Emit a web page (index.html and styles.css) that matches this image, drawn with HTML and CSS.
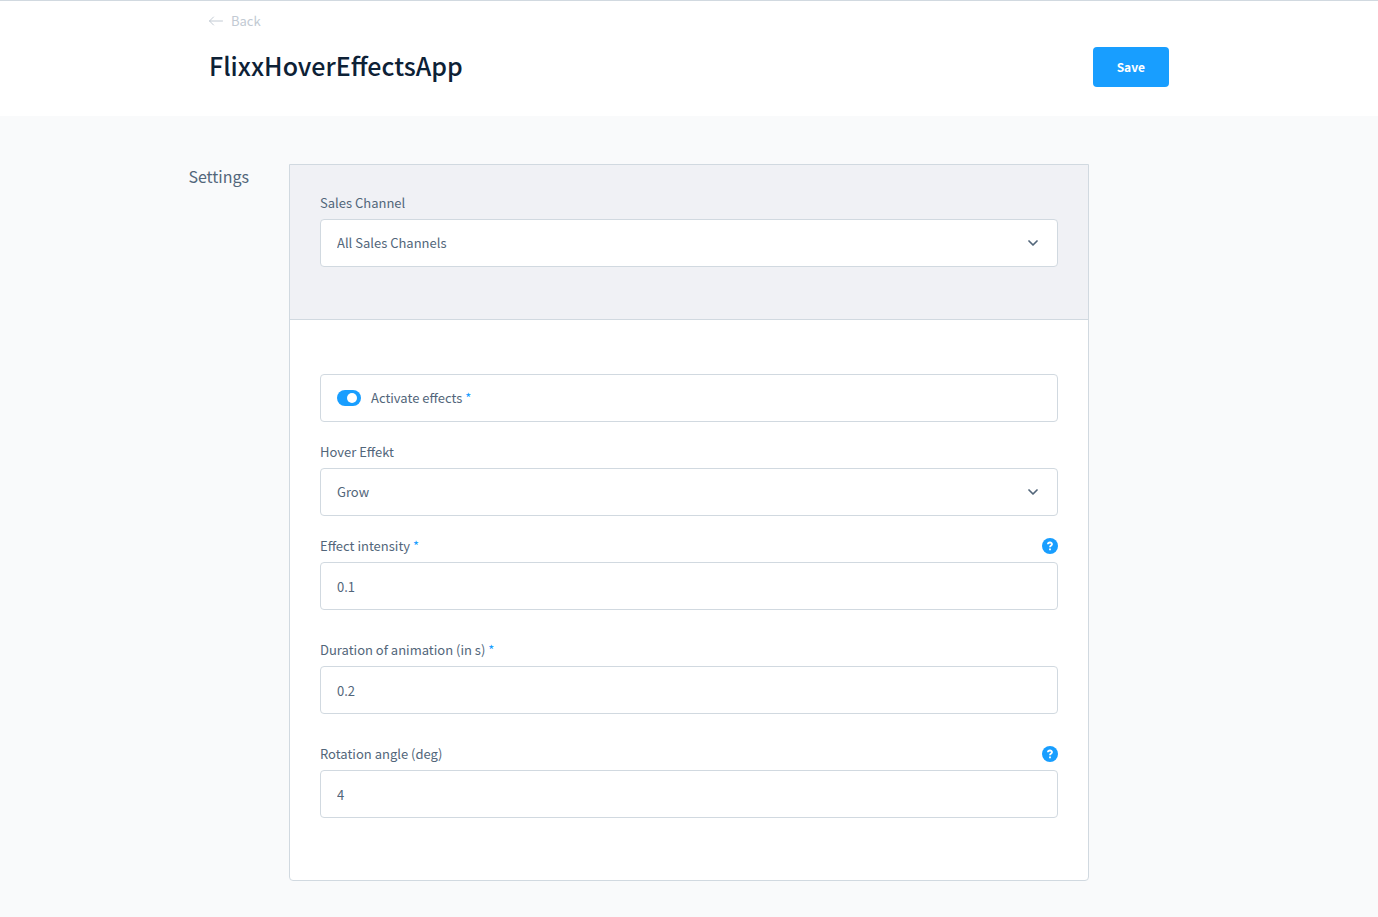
FILE: index.html
```html
<!DOCTYPE html>
<html lang="en">
<head>
<meta charset="utf-8">
<meta name="viewport" content="width=device-width, initial-scale=1">
<title>FlixxHoverEffectsApp</title>
<link rel="stylesheet" href="styles.css">
</head>
<body>
<header class="page-header">
  <div class="page-header__inner">
    <a class="back" href="#">
      <svg class="back__icon" viewBox="0 0 14 10" aria-hidden="true"><path d="M4.5 1 .5 5l4 4M.5 5h13"/></svg>
      Back
    </a>
    <div class="page-header__row">
      <h1 class="page-title">FlixxHoverEffectsApp</h1>
      <button class="button" type="button">Save</button>
    </div>
  </div>
</header>
<main class="settings">
  <h2 class="settings__title">Settings</h2>
  <form class="card">
    <div class="card__channel">
      <div class="field">
        <div class="field__head"><label for="channel">Sales Channel</label></div>
        <div class="select">
          <select class="control" id="channel"><option>All Sales Channels</option></select>
          <svg class="select__icon" viewBox="0 0 10 6" aria-hidden="true"><path d="m1 1 4 4 4-4"/></svg>
        </div>
      </div>
    </div>
    <div class="card__body">
      <div class="field field--switch">
        <label class="control switch">
          <input class="switch__input" type="checkbox" checked>
          <span>Activate effects <span class="required">*</span></span>
        </label>
      </div>
      <div class="field">
        <div class="field__head"><label for="effect">Hover Effekt</label></div>
        <div class="select">
          <select class="control" id="effect"><option>Grow</option></select>
          <svg class="select__icon" viewBox="0 0 10 6" aria-hidden="true"><path d="m1 1 4 4 4-4"/></svg>
        </div>
      </div>
      <div class="field field--text">
        <div class="field__head">
          <label for="intensity">Effect intensity <span class="required">*</span></label>
          <button class="help" type="button" aria-label="Help on effect intensity">
            <svg viewBox="0 0 16 16" aria-hidden="true"><circle cx="8" cy="8" r="8"/><path d="M5.9 6.2c.1-2.3 4.2-2.3 4.1.1 0 1.3-1.9 1.2-2 2.9M8 10.4v1.8"/></svg>
          </button>
        </div>
        <input class="control" id="intensity" type="text" value="0.1">
      </div>
      <div class="field field--text">
        <div class="field__head"><label for="duration">Duration of animation (in s) <span class="required">*</span></label></div>
        <input class="control" id="duration" type="text" value="0.2">
      </div>
      <div class="field field--text">
        <div class="field__head">
          <label for="angle">Rotation angle (deg)</label>
          <button class="help" type="button" aria-label="Help on rotation angle">
            <svg viewBox="0 0 16 16" aria-hidden="true"><circle cx="8" cy="8" r="8"/><path d="M5.9 6.2c.1-2.3 4.2-2.3 4.1.1 0 1.3-1.9 1.2-2 2.9M8 10.4v1.8"/></svg>
          </button>
        </div>
        <input class="control" id="angle" type="text" value="4">
      </div>
    </div>
  </form>
</main>
</body>
</html>
```
FILE: styles.css
```css
*, *::before, *::after {
  box-sizing: border-box;
}

body {
  margin: 0;
  background: #f9fafb;
  color: #52667a;
  font: 13px/16px "Noto Sans CJK SC", "Noto Sans", sans-serif;
}

.page-header {
  border-top: 1px solid #d1d9e0;
  background: #fff;
  padding: 12px 24px 29px;
}

.page-header__inner {
  max-width: 960px;
  margin: 0 auto;
}

.back {
  display: flex;
  align-items: center;
  gap: 8px;
  width: fit-content;
  color: #c2cad3;
  text-decoration: none;
}

.back__icon {
  width: 14px;
  height: 10px;
  fill: none;
  stroke: currentColor;
  stroke-linecap: round;
  stroke-linejoin: round;
}

.page-header__row {
  display: flex;
  align-items: flex-start;
  justify-content: space-between;
  gap: 24px;
  margin-top: 18px;
}

.page-title {
  margin: 0;
  color: #0d2136;
  font-size: 25px;
  font-weight: 500;
  line-height: 36px;
}

.button {
  height: 40px;
  padding: 0 24px;
  border: 0;
  border-radius: 4px;
  background: #189eff;
  color: #fff;
  font: inherit;
  font-size: 12px;
  font-weight: 700;
}

.settings {
  display: grid;
  grid-template-columns: 1fr minmax(0, 800px) 1fr;
  gap: 40px;
  padding: 48px 0 36px;
}

.settings__title {
  margin: 0;
  font-size: 16px;
  font-weight: 400;
  line-height: 24px;
  text-align: right;
}

.card {
  border: 1px solid #d1d9e0;
  border-radius: 0 0 4px 4px;
  background: #fff;
}

.card__channel {
  padding: 30px;
  border-bottom: 1px solid #d1d9e0;
  background: #f0f1f5;
}

.card__body {
  padding: 30px;
}

.field {
  margin-bottom: 22px;
}

.field--text {
  margin-bottom: 32px;
}

.field--switch {
  padding-top: 24px;
}

.field__head {
  display: flex;
  justify-content: space-between;
  margin-bottom: 8px;
}

.required {
  color: #189eff;
}

.control {
  display: block;
  width: 100%;
  height: 48px;
  margin: 0;
  padding: 0 16px;
  border: 1px solid #d1d9e0;
  border-radius: 4px;
  background: #fff;
  color: inherit;
  font: inherit;
  appearance: none;
}

.select {
  display: grid;
  align-items: center;
}

.select > * {
  grid-area: 1 / 1;
}

.select__icon {
  justify-self: end;
  width: 10px;
  height: 6px;
  margin-right: 20px;
  fill: none;
  stroke: #52667a;
  stroke-width: 1.7;
  stroke-linecap: round;
  stroke-linejoin: round;
  pointer-events: none;
}

.switch {
  display: flex;
  align-items: center;
  gap: 10px;
}

.switch__input {
  display: flex;
  align-items: center;
  justify-content: flex-end;
  width: 24px;
  height: 16px;
  margin: 0;
  padding: 0 4px;
  border-radius: 8px;
  background: #189eff;
  appearance: none;
}

.switch__input::before {
  width: 10px;
  height: 10px;
  border-radius: 50%;
  background: #fff;
  content: "";
}

.switch__input:not(:checked) {
  justify-content: flex-start;
  background: #c2cad3;
}

.help {
  width: 16px;
  height: 16px;
  padding: 0;
  border: 0;
  background: none;
}

.help svg {
  display: block;
  fill: #189eff;
}

.help path {
  fill: none;
  stroke: #fff;
  stroke-width: 1.8;
}
```
